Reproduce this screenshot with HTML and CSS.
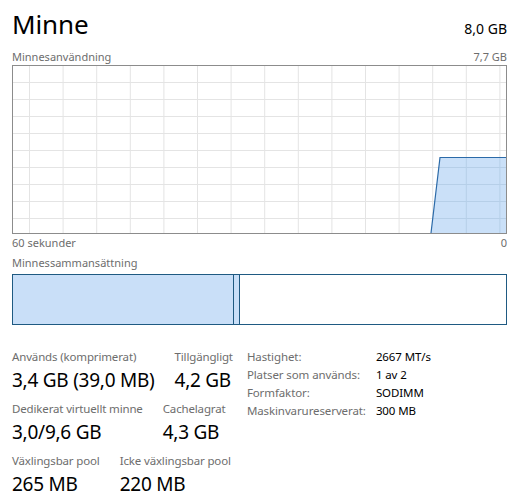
FILE: index.html
```html
<!DOCTYPE html>
<html lang="sv">
<head>
<meta charset="utf-8">
<link rel="stylesheet" href="styles.css">
</head>
<body>
<div class="panel">
  <div class="header">
    <div class="title">Minne</div>
    <div class="total">8,0 GB</div>
  </div>
  <div class="caption-row">
    <span>Minnesanvändning</span>
    <span>7,7 GB</span>
  </div>
  <div class="chart">
    <svg width="495" height="167" viewBox="0 0 495 167">
      <g class="grid">
        <line x1="17.5" y1="0" x2="17.5" y2="167"/>
        <line x1="51.1" y1="0" x2="51.1" y2="167"/>
        <line x1="84.7" y1="0" x2="84.7" y2="167"/>
        <line x1="118.3" y1="0" x2="118.3" y2="167"/>
        <line x1="151.9" y1="0" x2="151.9" y2="167"/>
        <line x1="185.5" y1="0" x2="185.5" y2="167"/>
        <line x1="219.1" y1="0" x2="219.1" y2="167"/>
        <line x1="252.7" y1="0" x2="252.7" y2="167"/>
        <line x1="286.3" y1="0" x2="286.3" y2="167"/>
        <line x1="319.9" y1="0" x2="319.9" y2="167"/>
        <line x1="353.5" y1="0" x2="353.5" y2="167"/>
        <line x1="387.1" y1="0" x2="387.1" y2="167"/>
        <line x1="420.7" y1="0" x2="420.7" y2="167"/>
        <line x1="454.3" y1="0" x2="454.3" y2="167"/>
        <line x1="487.9" y1="0" x2="487.9" y2="167"/>
        <line x1="0" y1="16.5" x2="495" y2="16.5"/>
        <line x1="0" y1="33.5" x2="495" y2="33.5"/>
        <line x1="0" y1="50.5" x2="495" y2="50.5"/>
        <line x1="0" y1="67.5" x2="495" y2="67.5"/>
        <line x1="0" y1="84.5" x2="495" y2="84.5"/>
        <line x1="0" y1="101.5" x2="495" y2="101.5"/>
        <line x1="0" y1="118.5" x2="495" y2="118.5"/>
        <line x1="0" y1="135.5" x2="495" y2="135.5"/>
        <line x1="0" y1="152.5" x2="495" y2="152.5"/>
      </g>
      <polygon class="area" points="419,167 428,91.5 495,91.5 495,167"/>
      <g class="grid-over">
        <line x1="454.3" y1="92" x2="454.3" y2="167"/>
        <line x1="487.9" y1="92" x2="487.9" y2="167"/>
        <line x1="426" y1="101.5" x2="495" y2="101.5"/>
        <line x1="424" y1="118.5" x2="495" y2="118.5"/>
        <line x1="422" y1="135.5" x2="495" y2="135.5"/>
        <line x1="420.5" y1="152.5" x2="495" y2="152.5"/>
      </g>
      <polyline class="stroke" points="419,167 428,91.5 495,91.5"/>
    </svg>
  </div>
  <div class="axis-row">
    <span>60 sekunder</span>
    <span>0</span>
  </div>
  <div class="caption-row comp-caption">
    <span>Minnessammansättning</span>
  </div>
  <div class="composition">
    <div class="seg used"></div>
    <div class="seg modified"></div>
    <div class="seg free"></div>
  </div>
  <div class="stats">
    <div class="stat-rows">
      <div class="stat-row">
        <div class="stat">
          <div class="label">Används (komprimerat)</div>
          <div class="value">3,4 GB (39,0 MB)</div>
        </div>
        <div class="stat">
          <div class="label">Tillgängligt</div>
          <div class="value">4,2 GB</div>
        </div>
      </div>
      <div class="stat-row">
        <div class="stat">
          <div class="label">Dedikerat virtuellt minne</div>
          <div class="value">3,0/9,6 GB</div>
        </div>
        <div class="stat">
          <div class="label">Cachelagrat</div>
          <div class="value">4,3 GB</div>
        </div>
      </div>
      <div class="stat-row">
        <div class="stat">
          <div class="label">Växlingsbar pool</div>
          <div class="value">265 MB</div>
        </div>
        <div class="stat">
          <div class="label">Icke växlingsbar pool</div>
          <div class="value">220 MB</div>
        </div>
      </div>
    </div>
    <div class="details">
      <span class="dl">Hastighet:</span><span class="dv">2667 MT/s</span>
      <span class="dl">Platser som används:</span><span class="dv">1 av 2</span>
      <span class="dl">Formfaktor:</span><span class="dv">SODIMM</span>
      <span class="dl">Maskinvarureserverat:</span><span class="dv">300 MB</span>
    </div>
  </div>
</div>
</body>
</html>
```
FILE: styles.css
```css
html, body {
  margin: 0;
  padding: 0;
  background: #ffffff;
}
body {
  font-family: "Noto Sans", "Open Sans", sans-serif;
  color: #000;
}
.panel {
  width: 495px;
  padding: 8px 20px 0 12px;
}
.header {
  display: flex;
  justify-content: space-between;
  align-items: baseline;
  height: 40px;
}
.title {
  font-size: 26px;
  font-weight: 400;
  line-height: 32px;
  letter-spacing: -0.1px;
}
.total {
  font-size: 14px;
  line-height: 32px;
}
.caption-row {
  display: flex;
  justify-content: space-between;
  font-size: 11px;
  line-height: 17px;
  color: #6d6d6d;
}
.chart {
  border: 1px solid #8c8c8c;
  height: 167px;
  box-sizing: content-box;
  width: 493px;
  overflow: hidden;
}
.chart svg {
  display: block;
  margin-left: -1px;
}
.grid line {
  stroke: #e4e4e4;
  stroke-width: 1;
}
.grid-over line {
  stroke: #b6cfe8;
  stroke-width: 1;
}
.area {
  fill: #cae0f8;
}
.stroke {
  fill: none;
  stroke: #2b6aa8;
  stroke-width: 1.2;
}
.axis-row {
  display: flex;
  justify-content: space-between;
  font-size: 11px;
  line-height: 17px;
  color: #6d6d6d;
}
.comp-caption {
  margin-top: 3px;
}
.composition {
  margin-top: 3px;
  height: 49px;
  border: 1px solid #1f5a82;
  display: flex;
}
.seg.used {
  width: 220px;
  background: #c9dff8;
  border-right: 1px solid #1f5a82;
}
.seg.modified {
  width: 5px;
  background: #c9dff8;
  border-right: 1px solid #1f5a82;
}
.seg.free {
  flex: 1;
  background: #ffffff;
}
.stats {
  display: flex;
  gap: 14px;
  margin-top: 22px;
}
.stat-rows {
  display: flex;
  flex-direction: column;
}
.stat-row {
  display: flex;
  gap: 20px;
  height: 52px;
}
.label {
  font-size: 11.5px;
  line-height: 20px;
  color: #6d6d6d;
  letter-spacing: -0.15px;
}
.value {
  font-size: 19px;
  line-height: 26px;
  letter-spacing: -0.25px;
}
.details {
  display: grid;
  grid-template-columns: 129px auto;
  font-size: 11.5px;
  line-height: 18px;
  align-content: start;
  padding-top: 1px;
  letter-spacing: -0.1px;
}
.dl {
  color: #6d6d6d;
}
.dv {
  color: #000;
}
```
